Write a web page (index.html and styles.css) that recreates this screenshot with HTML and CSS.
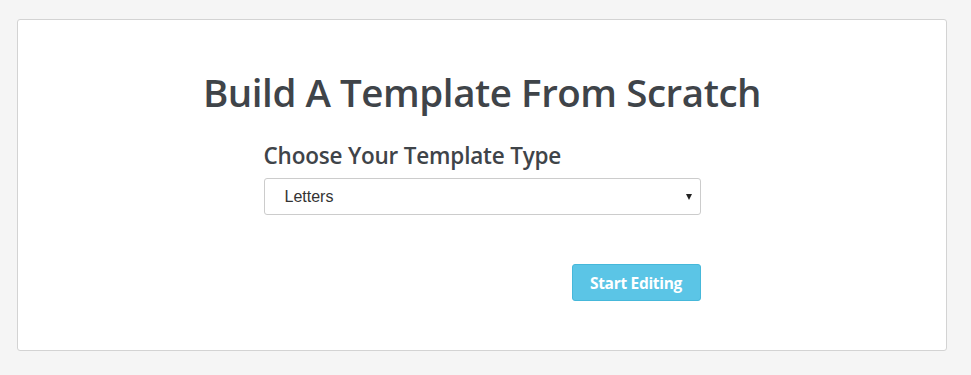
FILE: index.html
```html
<!DOCTYPE html>
<html>
<head>
<meta charset="utf-8">
<link rel="stylesheet" href="styles.css">
</head>
<body>
<div class="card">
  <h1 class="title">Build A Template From Scratch</h1>
  <div class="form">
    <label class="label">Choose Your Template Type</label>
    <div class="select">
      <span class="select-value">Letters</span>
      <span class="caret"></span>
    </div>
    <div class="actions">
      <button class="btn">Start Editing</button>
    </div>
  </div>
</div>
</body>
</html>
```
FILE: styles.css
```css
html, body {
  margin: 0;
  padding: 0;
  background: #f5f5f5;
}
body {
  padding: 19px 24px 24px 17px;
  font-family: "Open Sans", sans-serif;
  color: #3f4449;
}
.card {
  width: 930px;
  height: 332px;
  box-sizing: border-box;
  background: #fff;
  border: 1px solid #d3d3d3;
  border-radius: 3px;
  display: flex;
  flex-direction: column;
  align-items: center;
  padding-top: 46px;
}
.title {
  margin: 0;
  font-size: 38.5px;
  font-weight: 600;
  line-height: 52px;
  letter-spacing: -0.45px;
}
.form {
  width: 437px;
  margin-top: 24px;
  display: flex;
  flex-direction: column;
}
.label {
  font-size: 22.5px;
  font-weight: 600;
  line-height: 28px;
  letter-spacing: -0.2px;
  margin-bottom: 8px;
}
.select {
  height: 37px;
  box-sizing: border-box;
  border: 1px solid #ccc;
  border-radius: 3px;
  display: flex;
  align-items: center;
  justify-content: space-between;
  padding: 0 8px 0 20px;
  font-family: "Liberation Sans", Arial, sans-serif;
  font-size: 16px;
  color: #333;
}
.caret {
  width: 0;
  height: 0;
  border-left: 3.5px solid transparent;
  border-right: 3.5px solid transparent;
  border-top: 6px solid #222;
}
.actions {
  display: flex;
  justify-content: flex-end;
  margin-top: 49px;
}
.btn {
  width: 129px;
  height: 37px;
  background: #5bc5e6;
  border: 1px solid #46b8da;
  border-radius: 3px;
  color: #fff;
  font-family: "Open Sans", sans-serif;
  font-weight: 700;
  font-size: 15.5px;
  letter-spacing: -0.3px;
  padding: 0;
}
```
